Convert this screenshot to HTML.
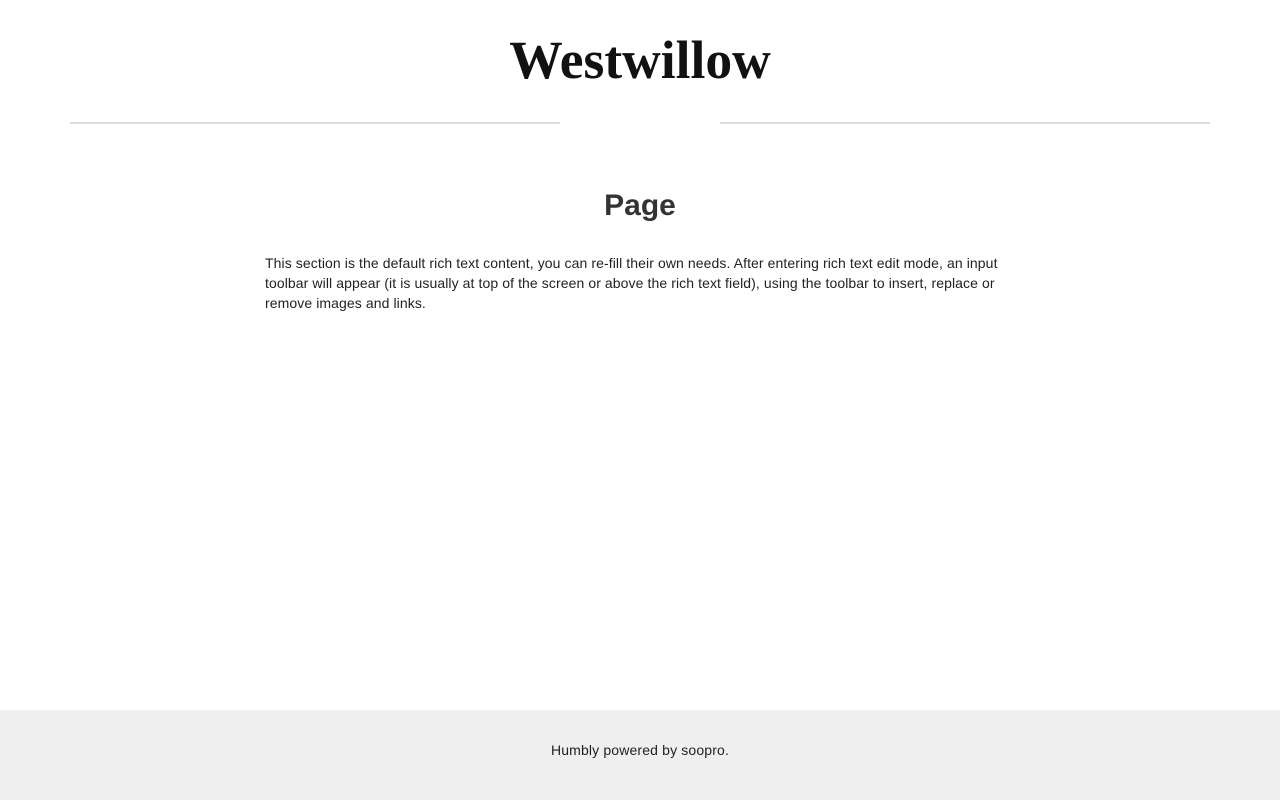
<!DOCTYPE html>
<html><head><style>
body{margin:0;width:1280px;height:800px;background:#fff;position:relative;font-family:"Liberation Sans",sans-serif;}
.t{position:absolute;top:29px;left:0;width:1280px;text-align:center;font-family:"Liberation Serif",serif;font-weight:bold;font-size:53.5px;line-height:62px;color:#111;}
.l{position:absolute;top:122px;height:2px;background:#ddd;width:490px}
h1{position:absolute;top:186px;left:0;width:1280px;text-align:center;margin:0;font-size:30px;line-height:40px;color:#333;font-weight:bold}
p{position:absolute;top:253px;left:265px;width:750px;margin:0;font-size:14px;line-height:20px;color:#222;letter-spacing:0.09px}
.f{position:absolute;top:710px;left:0;width:1280px;height:90px;background:#efefef;text-align:center;font-size:14px;line-height:80px;color:#222;letter-spacing:0.15px}
</style></head><body>
<div class="t">Westwillow</div>
<div class="l" style="left:70px"></div><div class="l" style="left:720px"></div>
<h1>Page</h1>
<p>This section is the default rich text content, you can re-fill their own needs. After entering rich text edit mode, an input toolbar will appear (it is usually at top of the screen or above the rich text field), using the toolbar to insert, replace or remove images and links.</p>
<div class="f">Humbly powered by soopro.</div>
</body></html>
